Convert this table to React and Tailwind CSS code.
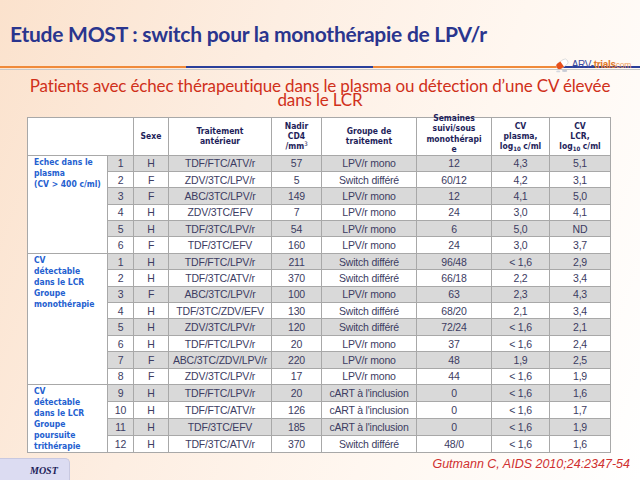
const groups = [
  {
    label: ["Echec dans le", "plasma", "(CV > 400 c/ml)"],
    rows: [
      ["1", "H", "TDF/FTC/ATV/r", "57", "LPV/r mono", "12", "4,3", "5,1"],
      ["2", "F", "ZDV/3TC/LPV/r", "5", "Switch différé", "60/12", "4,2", "3,1"],
      ["3", "F", "ABC/3TC/LPV/r", "149", "LPV/r mono", "12", "4,1", "5,0"],
      ["4", "H", "ZDV/3TC/EFV", "7", "LPV/r mono", "24", "3,0", "4,1"],
      ["5", "H", "TDF/3TC/LPV/r", "54", "LPV/r mono", "6", "5,0", "ND"],
      ["6", "F", "TDF/3TC/EFV", "160", "LPV/r mono", "24", "3,0", "3,7"],
    ],
  },
  {
    label: ["CV", "détectable", "dans le LCR", "Groupe", "monothérapie"],
    rows: [
      ["1", "H", "TDF/FTC/LPV/r", "211", "Switch différé", "96/48", "< 1,6", "2,9"],
      ["2", "H", "TDF/3TC/ATV/r", "370", "Switch différé", "66/18", "2,2", "3,4"],
      ["3", "F", "ABC/3TC/LPV/r", "100", "LPV/r mono", "63", "2,3", "4,3"],
      ["4", "H", "TDF/3TC/ZDV/EFV", "130", "Switch différé", "68/20", "2,1", "3,4"],
      ["5", "H", "ZDV/3TC/LPV/r", "120", "Switch différé", "72/24", "< 1,6", "2,1"],
      ["6", "H", "TDF/FTC/LPV/r", "20", "LPV/r mono", "37", "< 1,6", "2,4"],
      ["7", "F", "ABC/3TC/ZDV/LPV/r", "220", "LPV/r mono", "48", "1,9", "2,5"],
      ["8", "F", "ZDV/3TC/LPV/r", "17", "LPV/r mono", "44", "< 1,6", "1,9"],
    ],
  },
  {
    label: ["CV", "détectable", "dans le LCR", "Groupe", "poursuite", "trithérapie"],
    rows: [
      ["9", "H", "TDF/FTC/LPV/r", "20", "cART à l'inclusion", "0", "< 1,6", "1,6"],
      ["10", "H", "TDF/FTC/ATV/r", "126", "cART à l'inclusion", "0", "< 1,6", "1,7"],
      ["11", "H", "TDF/3TC/EFV", "185", "cART à l'inclusion", "0", "< 1,6", "1,9"],
      ["12", "H", "TDF/3TC/ATV/r", "370", "Switch différé", "48/0", "< 1,6", "1,6"],
    ],
  },
];

function Logo() {
  return (
    <div className="absolute right-[9px] top-[56px] flex items-center gap-[1px]">
      <svg width="17" height="17" viewBox="0 0 16 16">
        <g transform="rotate(-35 8 8)">
          <rect x="2" y="4.5" width="12" height="6" rx="3" fill="#ffffff" stroke="#d0d0d0" strokeWidth="0.6" />
          <path d="M8 4.5 H5 A3 3 0 0 0 5 10.5 H8 Z" fill="#e8501c" />
        </g>
        <ellipse cx="10" cy="14" rx="2.5" ry="1" fill="#c8ccd6" />
        <ellipse cx="4" cy="14.5" rx="2" ry="0.8" fill="#d4d8e0" />
      </svg>
      <div className="text-[10px] leading-none font-['Liberation_Sans',sans-serif] tracking-[-0.3px]">
        <span className="text-[#3a4aa0]">ARV-</span>
        <span className="text-[#e0782a] font-bold">trials</span>
        <span className="text-[#f0a060] text-[8.5px]">com</span>
      </div>
    </div>
  );
}

export default function App() {
  const th = "border border-[#a8a8a8] bg-white text-[#1e1e5a] font-bold text-[8.5px] leading-[10px] text-center align-middle font-['DejaVu_Sans_Condensed','DejaVu_Sans',sans-serif] px-[2px]";
  const td = "border border-[#a8a8a8] text-center align-middle p-0 text-[10.5px] leading-[14px] tracking-[-0.2px] text-[#3c3c62] font-['Liberation_Sans',Arial,sans-serif] whitespace-nowrap";
  return (
    <div className="w-[640px] h-[480px] relative overflow-hidden bg-[linear-gradient(110deg,#fbe2cd_0%,#fdeee2_35%,#fff7f0_65%,#ffffff_100%)] flex flex-col">
      <div className="pt-[19px] pl-[10px] h-[74px]">
        <h1 className="text-[21px] leading-[30px] text-[#2a358e] font-['Lato',sans-serif] font-bold tracking-[-0.25px]">
          Etude MOST : switch pour la monothérapie de LPV/r
        </h1>
      </div>
      <div className="flex h-[2px]">
        <div className="w-[186px] bg-[#f08a3a]" />
        <div className="w-[187px] bg-[#2a3f9a]" />
        <div className="w-[188px] bg-[#f08a3a]" />
        <div className="flex-1 bg-[#2a3f9a]" />
      </div>
      <div className="h-[1px] mt-[1px] bg-[#c8c8c8]" />
      <Logo />
      <div className="mt-[9px] text-center text-[#d0301a] text-[17px] leading-[14px] font-['Lato',sans-serif] tracking-[-0.15px]">
        <div>Patients avec échec thérapeutique dans le plasma ou détection d’une CV élevée</div>
        <div>dans le LCR</div>
      </div>
      <div className="mt-[10px] pl-[27px]">
        <table className="border-collapse table-fixed w-[583px] bg-white">
          <colgroup>
            <col className="w-[80px]" />
            <col className="w-[26px]" />
            <col className="w-[35px]" />
            <col className="w-[103px]" />
            <col className="w-[50px]" />
            <col className="w-[95px]" />
            <col className="w-[75px]" />
            <col className="w-[58px]" />
            <col className="w-[61px]" />
          </colgroup>
          <thead>
            <tr className="h-[38px]">
              <th colSpan={2} className={th}></th>
              <th className={th}>Sexe</th>
              <th className={th}>Traitement<br />antérieur</th>
              <th className={th}>Nadir<br />CD4<br />/mm<sup className="text-[6px] font-normal">3</sup></th>
              <th className={th}>Groupe de<br />traitement</th>
              <th className={th}>
                <div className="h-[37px] relative">
                  <div className="absolute left-0 right-0 top-[-5px] leading-[10.5px]">
                    Semaines<br />suivi/sous<br />monothérapi<br />e
                  </div>
                </div>
              </th>
              <th className={th}>CV<br />plasma,<br />log<sub className="text-[6px]">10</sub> c/ml</th>
              <th className={th}>CV<br />LCR,<br />log<sub className="text-[6px]">10</sub> c/ml</th>
            </tr>
          </thead>
          <tbody>
            {groups.map((g, gi) =>
              g.rows.map((r, ri) => (
                <tr key={gi + "-" + ri} className="h-[16.4px]">
                  {ri === 0 && (
                    <td rowSpan={g.rows.length} className="border border-[#a8a8a8] bg-white align-top pl-[6px] pt-[1px] text-[8.5px] leading-[11px] font-bold text-[#2460d0] font-['DejaVu_Sans_Condensed','DejaVu_Sans',sans-serif] whitespace-nowrap">
                      {g.label.map((l, i) => (
                        <div key={i}>{l}</div>
                      ))}
                    </td>
                  )}
                  {r.map((c, ci) => (
                    <td key={ci} className={td + (ri % 2 === 0 ? " bg-[#d9d9d9]" : " bg-white")}>
                      {c}
                    </td>
                  ))}
                </tr>
              ))
            )}
          </tbody>
        </table>
      </div>
      <div className="flex-1 flex items-start justify-between pt-[2px]">
        <div className="mt-[3px] w-[70px] h-[22px] bg-[#dcdcf2] rounded-tr-[5px] border-t border-r border-[#c8c8e0] pl-[30px] pt-[4px] text-[10px] italic font-bold text-[#1e1e5a] font-['Liberation_Serif',serif]">
          MOST
        </div>
        <div className="pr-[10px] text-[12.5px] italic text-[#d03030] font-['Liberation_Sans',Arial,sans-serif]">
          Gutmann C, AIDS 2010;24:2347-54
        </div>
      </div>
    </div>
  );
}
